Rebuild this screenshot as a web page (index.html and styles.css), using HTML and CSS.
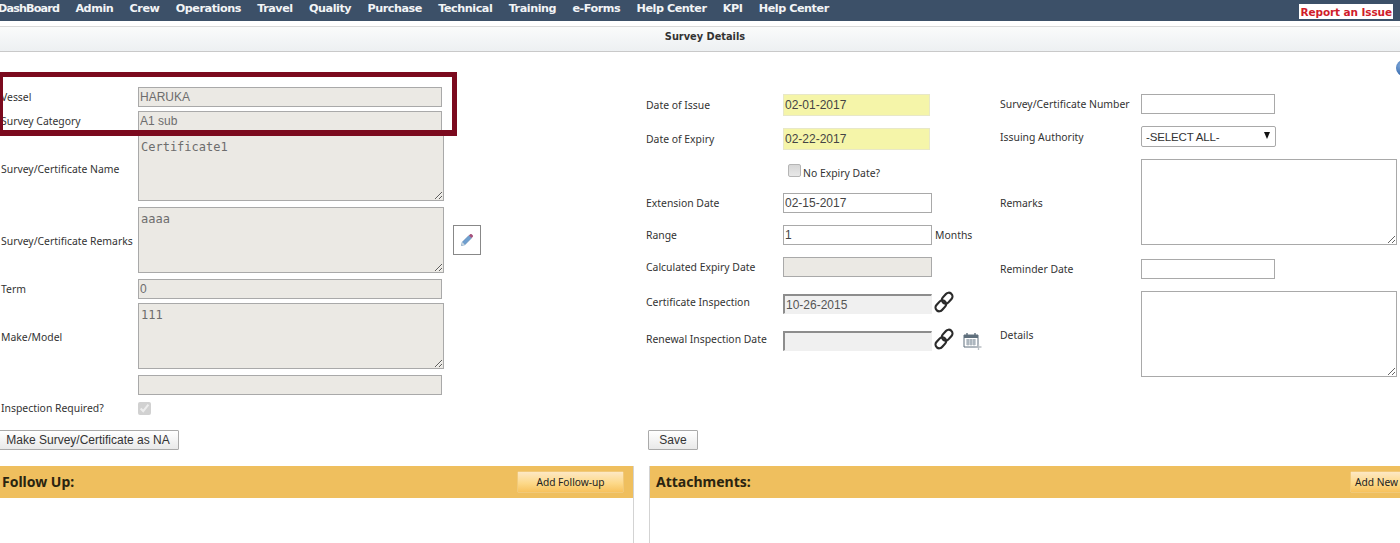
FILE: index.html
```html
<!DOCTYPE html>
<html>
  <head>
    <meta charset="UTF-8" />
    <title>Survey Details</title>
    <link rel="stylesheet" href="styles.css">
  </head>
  <body>
    <nav class="topnav">
      <ul class="menu">
        <li>DashBoard</li>
        <li>Admin</li>
        <li>Crew</li>
        <li>Operations</li>
        <li>Travel</li>
        <li>Quality</li>
        <li>Purchase</li>
        <li>Technical</li>
        <li>Training</li>
        <li>e-Forms</li>
        <li>Help Center</li>
        <li>KPI</li>
        <li>Help Center</li>
      </ul>
      <a class="report" href="#">Report an Issue</a>
    </nav>

    <div class="title-bar">Survey Details</div>

    <main class="content">
      <div class="help-dot"></div>

      <form class="form-grid">
        <!-- Left column -->
        <div class="col col-left">
          <div class="row">
            <label>Vessel</label>
            <input class="off" type="text" value="HARUKA" disabled />
          </div>
          <div class="row">
            <label>Survey Category</label>
            <input class="off" type="text" value="A1 sub" disabled />
          </div>
          <div class="row row-tall">
            <label>Survey/Certificate Name</label>
            <textarea class="off" disabled>Certificate1</textarea>
          </div>
          <div class="row row-tall">
            <label>Survey/Certificate Remarks</label>
            <textarea class="off" disabled>aaaa</textarea>
            <button class="edit-btn" type="button">
              <svg width="14" height="14" viewBox="0 0 14 14">
                <path d="M1.5 12.5l.8-3.4 6.6-6.6 2.6 2.6-6.6 6.6z" fill="#6f9fd0" stroke="#5b84ad" stroke-width=".6" />
                <path d="M1.5 12.5l.8-3.4 2.6 2.6z" fill="#c9d6df" />
                <path d="M8.9 2.5l1.2-1.2c.5-.5 1.1-.5 1.6 0l1 1c.5.5.5 1.1 0 1.6l-1.2 1.2z" fill="#a5517c" />
              </svg>
            </button>
          </div>
          <div class="row">
            <label>Term</label>
            <input class="off" type="text" value="0" disabled />
          </div>
          <div class="row row-tall">
            <label>Make/Model</label>
            <textarea class="off" disabled>111</textarea>
          </div>
          <div class="row">
            <label></label>
            <input class="off" type="text" disabled />
          </div>
          <div class="row row-check">
            <label>Inspection Required?</label>
            <input class="check-on" type="checkbox" checked disabled />
          </div>
        </div>

        <!-- Middle column -->
        <div class="col col-mid">
          <div class="row">
            <label>Date of Issue</label>
            <input class="due" type="text" value="02-01-2017" />
          </div>
          <div class="row">
            <label>Date of Expiry</label>
            <input class="due" type="text" value="02-22-2017" />
          </div>
          <div class="row row-noexpiry">
            <label></label>
            <input class="check-grey" type="checkbox" />
            <span>No Expiry Date?</span>
          </div>
          <div class="row">
            <label>Extension Date</label>
            <input type="text" value="02-15-2017" />
          </div>
          <div class="row">
            <label>Range</label>
            <input type="text" value="1" />
            <span class="unit">Months</span>
          </div>
          <div class="row row-calc">
            <label>Calculated Expiry Date</label>
            <input class="off" type="text" disabled />
          </div>
          <div class="row row-insp">
            <label>Certificate Inspection</label>
            <input class="inset" type="text" value="10-26-2015" disabled />
            <svg class="link-icon" width="22" height="22" viewBox="0 0 22 22">
              <g fill="none" stroke="#2b2b2b" stroke-width="2.2">
                <rect x="10.5" y="1" width="7.500" height="12" rx="3.700" transform="rotate(42 14 7)" />
                <rect x="4" y="9" width="7.500" height="12" rx="3.700" transform="rotate(42 8 15)" />
              </g>
            </svg>
          </div>
          <div class="row row-renew">
            <label>Renewal Inspection Date</label>
            <input class="inset" type="text" disabled />
            <svg class="link-icon" width="22" height="22" viewBox="0 0 22 22">
              <g fill="none" stroke="#2b2b2b" stroke-width="2.2">
                <rect x="10.5" y="1" width="7.500" height="12" rx="3.700" transform="rotate(42 14 7)" />
                <rect x="4" y="9" width="7.500" height="12" rx="3.700" transform="rotate(42 8 15)" />
              </g>
            </svg>
            <svg class="cal-icon" width="19" height="18" viewBox="0 0 19 18">
              <path d="M1 3h14v12H1z" fill="#fff" stroke="#5f6f7c" />
              <path d="M1 3h14v3H1z" fill="#5f6f7c" />
              <path d="M4 1v3M12 1v3" stroke="#5f6f7c" stroke-width="1.4" />
              <path d="M3 8h10M3 10h10M3 12h10M5 7v6.500M8 7v6.500M11 7v6.500" stroke="#7f8d99" stroke-width=".8" />
              <path d="M15.500 12v6M12.500 15h6" stroke="#b9bfc4" stroke-width="1.300" />
            </svg>
          </div>
        </div>

        <!-- Right column -->
        <div class="col col-right">
          <div class="row">
            <label>Survey/Certificate Number</label>
            <input type="text" />
          </div>
          <div class="row">
            <label>Issuing Authority</label>
            <div class="select-wrap">
              <select>
                <option>-SELECT ALL-</option>
              </select>
              <span class="select-arrow"></span>
            </div>
          </div>
          <div class="row row-big row-remarks">
            <label>Remarks</label>
            <textarea></textarea>
          </div>
          <div class="row">
            <label>Reminder Date</label>
            <input type="text" />
          </div>
          <div class="row row-big row-details">
            <label>Details</label>
            <textarea></textarea>
          </div>
        </div>
      </form>

      <div class="actions">
        <div class="action-left"><button class="btn btn-na" type="button">Make Survey/Certificate as NA</button></div>
        <div class="action-right"><button class="btn" type="button">Save</button></div>
      </div>

      <div class="panels">
        <section class="panel panel-follow">
          <header class="panel-head">
            <h2>Follow Up:</h2>
            <button class="add-btn" type="button">Add Follow-up</button>
          </header>
        </section>
        <section class="panel panel-attach">
          <header class="panel-head">
            <h2>Attachments:</h2>
            <button class="add-btn add-new" type="button">Add New</button>
          </header>
        </section>
      </div>

      <!-- highlight drawn over the screenshot -->
      <div class="highlight"></div>
    </main>
  </body>
</html>
```

FILE: styles.css
```css
html,
body {
  margin: 0;
  padding: 0;
  height: 543px;
  overflow: hidden;
  background: #fff;
}
body {
  font-family: "Noto Sans", sans-serif;
  font-size: 10.400px;
  color: #333;
}

/* top bar */
.topnav {
  height: 21px;
  background: #3c5068;
  display: flex;
  justify-content: space-between;
  overflow: hidden;
}
.menu {
  list-style: none;
  display: flex;
  gap: 16.300px;
  margin: 0 0 0 -2px;
  padding: 0;
  font-family: "DejaVu Sans", sans-serif;
  font-size: 11.200px;
  font-weight: bold;
  line-height: 17px;
  color: #f2f4f6;
  letter-spacing: -0.450px;
}
.menu li:first-child {
  letter-spacing: -0.850px;
}
.report {
  align-self: flex-start;
  margin: 4px 7px 0 0;
  padding: 0 1px;
  height: 15px;
  background: #fff;
  color: #d01c2a;
  font-family: "DejaVu Sans", sans-serif;
  font-size: 10.500px;
  font-weight: bold;
  line-height: 16px;
  text-decoration: none;
  letter-spacing: -0.100px;
}

.title-bar {
  margin-top: 5px;
  height: 24px;
  padding-left: 10px;
  border-top: 1px solid #d9d9d9;
  border-bottom: 1px solid #c9c9c9;
  background: linear-gradient(#fafbfb, #edf0f2);
  text-align: center;
  font-family: "DejaVu Sans", sans-serif;
  font-size: 9.800px;
  font-weight: bold;
  line-height: 20px;
  color: #333;
}

.content {
  position: relative;
}
.help-dot {
  position: absolute;
  top: 8px;
  left: 1396px;
  width: 16px;
  height: 16px;
  border-radius: 50%;
  background: radial-gradient(circle at 30% 35%, #7ea6d8, #2f65ab 70%);
}

/* form */
.form-grid {
  display: grid;
  grid-template-columns: 646px 354px 400px;
  height: 378px;
}
.col {
  display: flex;
  flex-direction: column;
}
.col-left {
  padding-top: 35px;
  gap: 4px;
}
.col-mid,
.col-right {
  padding-top: 42px;
  gap: 12px;
}
.row {
  display: flex;
  align-items: center;
  min-height: 20px;
}
.col-left label {
  width: 137px;
  margin-left: 1px;
  flex: none;
}
.col-mid label {
  width: 137px;
  flex: none;
}
.col-right label {
  width: 141px;
  flex: none;
}
.row-tall {
  margin-bottom: 2px;
}
.row-tall label {
  margin-top: 2px;
}
.row-check {
  margin-top: 1px;
  height: 16px;
  min-height: 16px;
}
.row-noexpiry {
  height: 24px;
  margin-top: -2px;
  margin-bottom: -3px;
  min-height: 24px;
}
.row-noexpiry span {
  margin-top: 2px;
}
.row-calc,
.row-insp {
  margin-bottom: 5px;
}
.row-insp,
.row-renew {
  height: 20px;
}
.row-insp label,
.row-renew label {
  margin-bottom: 4px;
}

input[type="text"],
select,
textarea {
  box-sizing: border-box;
  border: 1px solid #a9a9a9;
  border-radius: 0;
  background: #fff;
  color: #444;
  font-family: "Liberation Sans", sans-serif;
  font-size: 12px;
  margin: 0;
  padding: 0 1px;
  outline: none;
}
input[type="text"] {
  height: 20px;
}
.col-left input[type="text"] {
  width: 304px;
}
.col-mid input[type="text"] {
  width: 149px;
}
.col-right input[type="text"] {
  width: 134px;
}
textarea {
  font-family: "DejaVu Sans Mono", monospace;
  font-size: 12px;
  line-height: 14px;
  padding: 4px 2px;
}
.col-left textarea {
  width: 306px;
  height: 66px;
}
.col-right textarea {
  width: 256px;
  height: 100%;
}
.row-remarks {
  height: 86px;
  margin-bottom: 2px;
}
.row-remarks label {
  margin-top: 2px;
}
.row-details {
  height: 86px;
}
.row-details label {
  margin-top: 2px;
}
.off {
  background: #ebe9e4 !important;
  color: #6d6d6d !important;
  opacity: 1;
}
.col-mid input.due {
  height: 22px;
  width: 147px;
  background: #f5f5a9;
  border-color: #e8e8c8;
  color: #444;
}
.col-mid input.inset {
  border: 1px solid #f0f0f0;
  border-top: 2px solid #8d8d8d;
  border-left: 2px solid #8d8d8d;
  background: #f0f0f0;
  color: #555;
  opacity: 1;
}
.select-wrap {
  position: relative;
  width: 135px;
  height: 21px;
}
select {
  appearance: none;
  width: 135px;
  height: 21px;
  padding-left: 4px;
  border-radius: 2px;
  color: #333;
  font-size: 11.500px;
  letter-spacing: -0.150px;
}
.select-arrow {
  position: absolute;
  top: 6px;
  right: 6px;
  border-left: 3.500px solid transparent;
  border-right: 3.500px solid transparent;
  border-top: 7px solid #111;
}
.unit {
  margin-left: 3px;
}
input[type="checkbox"] {
  margin: 0;
  width: 13px;
  height: 13px;
}
.check-grey {
  appearance: none;
  box-sizing: border-box;
  width: 12px;
  height: 12px;
  border: 1px solid #b5b5b5;
  border-radius: 2px;
  background: linear-gradient(#d6d6d6, #e8e8e8);
}
.row-noexpiry .check-grey {
  margin: -4px 2px 0 5px;
}
.edit-btn {
  width: 28px;
  height: 30px;
  margin-left: 9px;
  padding: 0;
  border: 1px solid #888;
  background: #fff;
  display: flex;
  align-items: center;
  justify-content: center;
}
.link-icon {
  flex: none;
  margin: -4px 0 0 1px;
}
.cal-icon {
  flex: none;
  margin: 0 0 0 8px;
}

/* buttons under the form */
.actions {
  display: grid;
  grid-template-columns: 648px 1fr;
  height: 36px;
}
.btn {
  height: 20px;
  padding: 0 6px;
  border: 1px solid #aaa;
  border-radius: 1px;
  background: linear-gradient(#fff, #e9e9e9);
  color: #333;
  font-family: "Liberation Sans", sans-serif;
  font-size: 12px;
}
.btn-na {
  width: 180px;
  padding: 0 7px 0 5px;
}
.action-left {
  margin-left: -1px;
}
.action-right .btn {
  width: 50px;
}

/* follow up / attachments */
.panels {
  display: grid;
  grid-template-columns: 634px 751px;
  gap: 15px;
}
.panel {
  height: 77px;
}
.panel-follow {
  border-right: 1px solid #d3d3d3;
}
.panel-attach {
  border-left: 1px solid #d3d3d3;
}
.panel-head {
  height: 32px;
  background: #efbf5e;
  display: flex;
  align-items: center;
  justify-content: space-between;
  padding: 0 10px 0 2px;
}
.panel-attach .panel-head {
  padding: 0 0 0 6px;
}
.panel-head h2 {
  margin: 0 0 2px;
  font-family: "Noto Sans", sans-serif;
  font-size: 14px;
  font-weight: bold;
  color: #2a2410;
}
.add-btn {
  width: 105px;
  height: 20px;
  padding: 0;
  border: 0;
  background: linear-gradient(#fde8c4, #fdd98a 55%, #f7c25d);
  color: #222;
  font-family: "Noto Sans", sans-serif;
  font-size: 10.200px;
  box-shadow: 0 0 1px #fff;
}
.add-new {
  width: 49px;
  padding-left: 4px;
  text-align: left;
}

.highlight {
  position: absolute;
  top: 20px;
  left: -2px;
  width: 449px;
  height: 53px;
  border: 5px solid #7b0a1e;
  border-bottom-width: 6px;
}
```
